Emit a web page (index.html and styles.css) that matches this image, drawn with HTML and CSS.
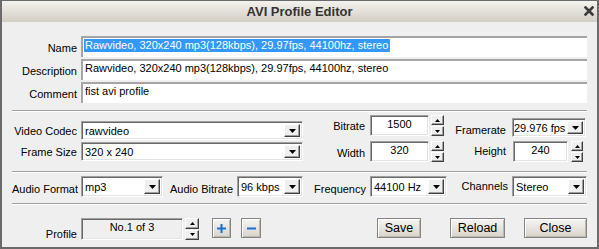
FILE: index.html
```html
<!doctype html>
<html lang="en">
<head>
<meta charset="utf-8">
<title>AVI Profile Editor</title>
<link rel="stylesheet" href="styles.css">
</head>
<body>

<div class="window">
  <!-- title bar -->
  <header class="titlebar">
    <span></span>
    <span class="title">AVI Profile Editor</span>
    <svg class="close" width="10" height="10" viewBox="0 0 10 10">
      <path d="M1.5 1.5 L8.5 8.5 M8.5 1.5 L1.5 8.5" stroke="#3a3a3a" stroke-width="2.6" stroke-linecap="square"/>
    </svg>
  </header>

  <div class="content">
    <!-- ── name / description / comment ───────────────── -->
    <section class="info">
      <label>Name</label>
      <div class="field name"><span class="sel">Rawvideo, 320x240 mp3(128kbps), 29.97fps, 44100hz, stereo</span><span class="caret"></span></div>
      <label>Description</label>
      <div class="field">Rawvideo, 320x240 mp3(128kbps), 29.97fps, 44100hz, stereo</div>
      <label>Comment</label>
      <div class="field">fist avi profile</div>
    </section>

    <div class="sep"></div>

    <!-- ── video ──────────────────────────────────────── -->
    <section class="video">
      <div class="grp grp-a">
        <label>Video Codec</label>
        <div class="select"><span class="val">rawvideo</span><span class="drop"><svg width="7" height="4"><polygon points="0,0 7,0 3.5,4" fill="#000"/></svg></span></div>
        <label>Frame Size</label>
        <div class="select"><span class="val">320 x 240</span><span class="drop"><svg width="7" height="4"><polygon points="0,0 7,0 3.5,4" fill="#000"/></svg></span></div>
      </div>

      <div class="grp grp-b">
        <label>Bitrate</label>
        <div class="spin-field">
          <div class="num">1500</div>
          <div class="spin">
            <span><svg width="5" height="3"><polygon points="2.5,0 5,3 0,3" fill="#000"/></svg></span>
            <span><svg width="5" height="3"><polygon points="0,0 5,0 2.5,3" fill="#000"/></svg></span>
          </div>
        </div>
        <label>Width</label>
        <div class="spin-field">
          <div class="num">320</div>
          <div class="spin">
            <span><svg width="5" height="3"><polygon points="2.5,0 5,3 0,3" fill="#000"/></svg></span>
            <span><svg width="5" height="3"><polygon points="0,0 5,0 2.5,3" fill="#000"/></svg></span>
          </div>
        </div>
      </div>

      <div class="grp grp-c">
        <label>Framerate</label>
        <div class="select fps"><span class="val">29.976 fps</span><span class="drop"><svg width="7" height="4"><polygon points="0,0 7,0 3.5,4" fill="#000"/></svg></span></div>
        <label>Height</label>
        <div class="spin-field small">
          <div class="num">240</div>
          <div class="spin">
            <span><svg width="5" height="3"><polygon points="2.5,0 5,3 0,3" fill="#000"/></svg></span>
            <span><svg width="5" height="3"><polygon points="0,0 5,0 2.5,3" fill="#000"/></svg></span>
          </div>
        </div>
      </div>
    </section>

    <div class="sep"></div>

    <!-- ── audio ──────────────────────────────────────── -->
    <section class="audio">
      <label class="l1">Audio Format</label>
      <div class="select s1"><span class="val">mp3</span><span class="drop"><svg width="7" height="4"><polygon points="0,0 7,0 3.5,4" fill="#000"/></svg></span></div>
      <label class="l2">Audio Bitrate</label>
      <div class="select s2"><span class="val">96 kbps</span><span class="drop"><svg width="7" height="4"><polygon points="0,0 7,0 3.5,4" fill="#000"/></svg></span></div>
      <label class="l3">Frequency</label>
      <div class="select s3"><span class="val">44100 Hz</span><span class="drop"><svg width="7" height="4"><polygon points="0,0 7,0 3.5,4" fill="#000"/></svg></span></div>
      <label class="l4">Channels</label>
      <div class="select s4"><span class="val">Stereo</span><span class="drop"><svg width="7" height="4"><polygon points="0,0 7,0 3.5,4" fill="#000"/></svg></span></div>
    </section>

    <div class="sep"></div>

    <!-- ── profile + actions ──────────────────────────── -->
    <section class="bottom">
      <label class="profile-label">Profile</label>
      <div class="profile-box">No.1 of 3</div>
      <div class="spin tall">
        <span><svg width="5" height="3"><polygon points="2.5,0 5,3 0,3" fill="#000"/></svg></span>
        <span><svg width="5" height="3"><polygon points="0,0 5,0 2.5,3" fill="#000"/></svg></span>
      </div>
      <button class="btn icon plus"><svg width="9" height="9"><rect x="3.5" y="0" width="2" height="9" fill="#1b6fd6"/><rect x="0" y="3.5" width="9" height="2" fill="#1b6fd6"/></svg></button>
      <button class="btn icon minus"><svg width="9" height="9"><rect x="0" y="3.5" width="9" height="2" fill="#1b6fd6"/></svg></button>

      <div class="actions">
        <button class="btn save">Save</button>
        <button class="btn reload">Reload</button>
        <button class="btn close-btn">Close</button>
      </div>
    </section>
  </div>
</div>

</body>
</html>
```

FILE: styles.css
```css
:root{
  --bg:     #efefef;   /* dialog face */
  --dark:   #6a6a6a;   /* window frame */
  --shade:  #a0a0a0;   /* sunken edge */
  --txt:    #000;
  --sel:    #3399ff;
}

* {
  box-sizing: border-box;
  margin: 0;
  padding: 0;
}
body {
  font-family: 'Liberation Sans', Arial, sans-serif;
  font-size: 11px;
  color: var(--txt);
  background: #fff;
}

/* ── window frame ─────────────────────────────────────────────── */
.window {
  width: 599px;
  height: 249px;
  border: 2px solid var(--dark);
  border-top-width: 1px;
  background: var(--bg);
  display: flex;
  flex-direction: column;
}
.titlebar {
  height: 21px;
  display: grid;
  grid-template-columns: 1fr auto 1fr;
  align-items: center;
  background: linear-gradient(#f4f2ee, #d3cec5);
}
.title {
  font-size: 13px;
  font-weight: bold;
  color: #333;
  margin-top: -1px;
}
.close {
  justify-self: end;
  margin-right: 3px;
  margin-top: -1px;
}

.content {
  flex: 1;
  padding: 0 10px;
}

label {
  text-align: right;
  white-space: nowrap;
  align-self: center;
}

/* separator */
.sep {
  height: 2px;
  border-top: 1px solid var(--shade);
  border-bottom: 1px solid #fff;
}

/* ── name / description / comment ────────────────────────────── */
.info {
  display: grid;
  grid-template-columns: 65px 1fr;
  grid-auto-rows: 21px;
  column-gap: 4px;
  row-gap: 2px;
  padding-top: 14px;
  margin-bottom: 7px;
}
.info label {
  padding-top: 2px;
}
.field {
  background: #fff;
  border-top: 2px solid #a5a5a5;
  border-left: 2px solid #a5a5a5;
  padding: 1px 2px;
  line-height: 13px;
  white-space: nowrap;
  display: flex;
  align-items: flex-start;
}
.field.name {
  padding-left: 1px;
}
.sel {
  background: var(--sel);
  color: #fff;
  padding: 0 1px;
}
.caret {
  width: 1px;
  height: 13px;
  background: #e07b18;
}

/* ── sunken controls ─────────────────────────────────────────── */
.select,
.num,
.profile-box {
  border: 1px solid;
  border-color: var(--shade) #fff #fff var(--shade);
  box-shadow: inset 1px 1px #696969, inset -1px -1px #e3e3e3;
}
.select {
  background: #fff;
  display: flex;
  align-items: stretch;
  padding: 2px;
}
.select .val {
  flex: 1;
  display: flex;
  align-items: center;
  padding-left: 1px;
  white-space: nowrap;
  overflow: hidden;
}
.drop {
  width: 16px;
  display: flex;
  align-items: center;
  justify-content: center;
  background: var(--bg);
  border: 1px solid;
  border-color: #fff #404040 #404040 #fff;
  box-shadow: inset -1px -1px #a0a0a0;
}

.num {
  background: #fff;
  width: 59px;
  text-align: center;
  padding-top: 2px;
  line-height: 13px;
}

.spin {
  width: 13px;
  display: flex;
  flex-direction: column;
  gap: 1px;
}
.spin span {
  flex: 1;
  display: flex;
  align-items: center;
  justify-content: center;
  background: var(--bg);
  border: 1px solid;
  border-color: #fff #404040 #404040 #fff;
  box-shadow: inset -1px -1px #a0a0a0;
}

/* ── video block ─────────────────────────────────────────────── */
.video {
  height: 59px;
  display: flex;
  align-items: flex-start;
}
.grp {
  display: grid;
}
.grp-a {
  grid-template-columns: 65px 222px;
  grid-auto-rows: 19px;
  column-gap: 4px;
  row-gap: 2px;
  padding-top: 9px;
}
.grp-b {
  margin-left: 22px;
  grid-template-columns: 40px auto;
  grid-auto-rows: 21px;
  column-gap: 5px;
  row-gap: 5px;
  padding-top: 3px;
}
.grp-b label:nth-child(3) {
  margin-top: 2px;
}
.grp-c {
  margin-left: 7px;
  grid-template-columns: 55px auto;
  grid-template-rows: 19px 21px;
  column-gap: 6px;
  row-gap: 4px;
  padding-top: 6px;
}
.grp-c label:first-child {
  margin-top: 5px;
}
.grp-c label:nth-child(3) {
  margin-top: -2px;
}
.spin-field {
  display: flex;
  gap: 2px;
}
.spin-field.small {
  margin-left: 1px;
  gap: 3px;
}
.spin-field.small .num {
  width: 55px;
}
.spin-field.small .spin {
  width: 12px;
}
.select.fps {
  width: 74px;
  padding-left: 1px;
}
.select.fps .val {
  padding-left: 0;
}

/* ── audio block ─────────────────────────────────────────────── */
.audio {
  height: 30px;
  padding-top: 3px;
  display: flex;
  align-items: flex-start;
}
.audio label {
  height: 21px;
  line-height: 21px;
  padding-right: 4px;
}
.audio .select {
  height: 21px;
}
.l1 { width: 69px; }
.l2 { width: 74px; }
.l3 { width: 67px; }
.l4 { width: 65px; line-height: 15px !important; }
.s1 { width: 82px; }
.s2 { width: 66px; }
.s3 { width: 77px; }
.s4 { width: 75px; }

/* ── bottom row ──────────────────────────────────────────────── */
.bottom {
  padding-top: 13px;
  display: flex;
  align-items: flex-start;
}
.profile-label {
  width: 65px;
  margin-top: 9px;
  margin-right: 4px;
}
.profile-box {
  width: 102px;
  height: 22px;
  background: var(--bg);
  text-align: center;
  padding-top: 2px;
  line-height: 13px;
}
.spin.tall {
  width: 14px;
  height: 22px;
  margin-left: 2px;
}

.btn {
  font-family: inherit;
  font-size: 12.5px;
  color: #000;
  height: 20px;
  background: linear-gradient(#f6f5f2, #d8d4cb);
  border: 1px solid #858585;
  box-shadow: inset 1px 1px #fff, inset -1px -1px #bcb8ae;
}
.btn.icon {
  display: flex;
  align-items: center;
  justify-content: center;
}
.plus {
  width: 19px;
  margin-left: 13px;
}
.minus {
  width: 20px;
  margin-left: 10px;
}
.actions {
  margin-left: auto;
  display: flex;
}
.save { width: 44px; }
.reload { width: 55px; margin-left: 29px; }
.close-btn { width: 63px; margin-left: 19px; }
```
